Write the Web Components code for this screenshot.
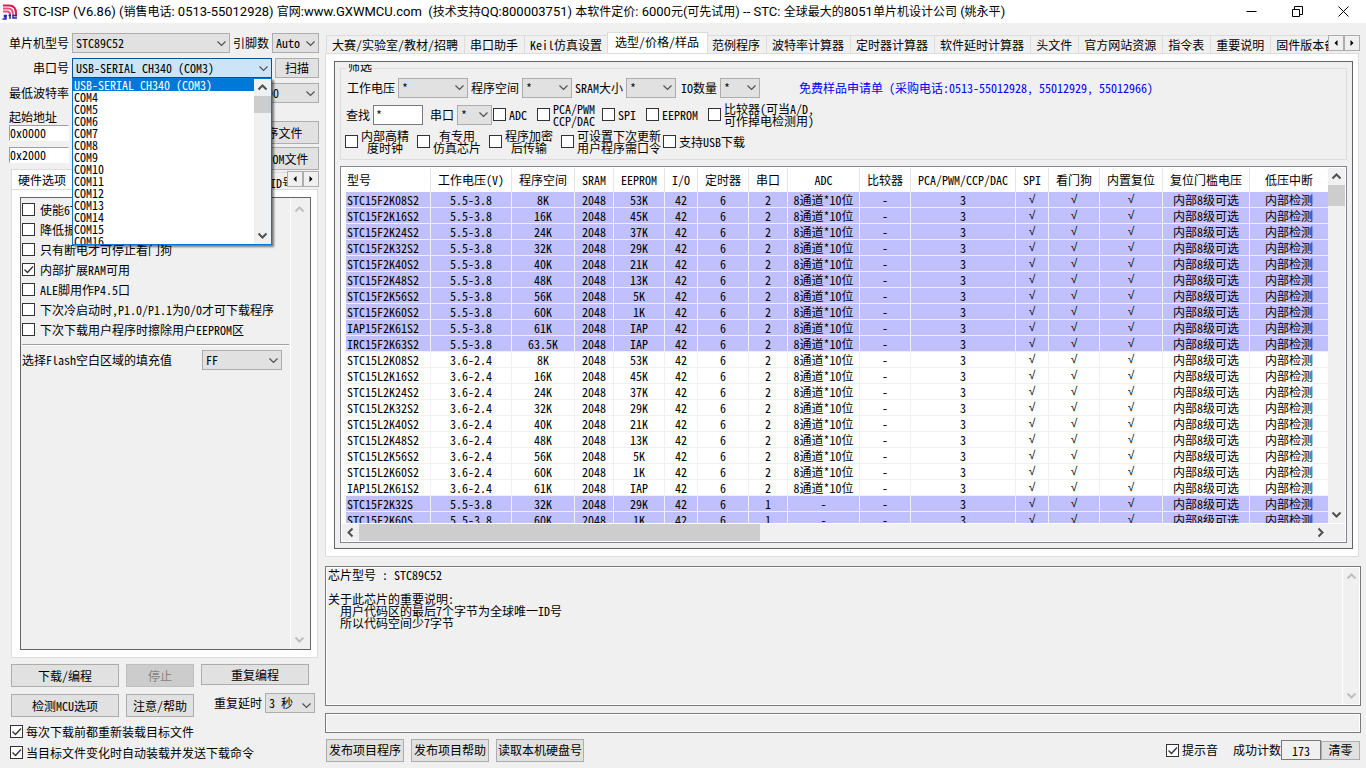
<!DOCTYPE html>
<html lang="zh-CN">
<head>
<meta charset="utf-8">
<title>STC-ISP (V6.86)</title>
<style>
html, body { margin: 0; height: 100%; }
body {
  background: #f0f0f0; color: #000;
  font-family: "Noto Sans CJK SC", sans-serif;
  font-size: 12px; line-height: 16px;
  font-feature-settings: "hwid"; font-kerning: none;
  overflow: hidden;
}
</style>
</head>
<body>
<isp-app></isp-app>
<script>
const SHARED = `
  *, *::before, *::after { box-sizing: border-box; }
  button, input, select, textarea { font: inherit; font-feature-settings: "hwid"; font-kerning: none; color: inherit; margin: 0; border-radius: 0; }
  svg { display: block; }
`;
const define = (name, css, html, after) => {
  customElements.define(name, class extends HTMLElement {
    connectedCallback() {
      if (this.shadowRoot) return;
      const root = this.attachShadow({ mode: 'open' });
      const body = typeof html === 'function' ? html(this) : html;
      root.innerHTML = `<style>${SHARED}${css}</style>${body}`;
      if (after) after(this, root);
    }
  });
};
const attr = (el, name, fallback = '') => el.getAttribute(name) ?? fallback;

/* Direction mark used by scroll bars and drop-downs */
define('win-chevron', `
  :host { display: block; width: 11px; height: 11px; color: #505050; pointer-events: none; }
  :host([dir="up"]) svg { rotate: 180deg; }
  :host([dir="left"]) svg { rotate: 90deg; }
  :host([dir="right"]) svg { rotate: -90deg; }
`, el => `<svg width="11" height="11" viewBox="0 0 11 11" fill="none" stroke="currentColor" stroke-width="${el.hasAttribute('bold') ? 2 : 1.2}"><path d="M1.5 3.5l4 4 4-4"/></svg>`);

/* Labelled drop-down */
define('win-select', `
  :host { display: flex; }
  label { flex: none; line-height: 20px; padding-right: 3px; text-align: right; }
  .box { display: grid; flex: none; width: var(--w, 50px); }
  select, win-chevron { grid-area: 1 / 1; }
  select { appearance: none; width: 100%; height: 20px; padding: 0 0 0 3px; border: 1px solid #adadad; background: #e1e1e1; line-height: 18px; outline: 0; }
  win-chevron { justify-self: end; align-self: center; margin-right: 3px; }
  :host([open]) select { background: #cce4f7; border-color: #00549a; }
  :host([form]) label { width: 63px; }
`, el => `<label for="s">${attr(el, 'label')}</label>
  <div class="box"><select id="s" aria-label="${attr(el, 'label') || attr(el, 'name')}"><option>${attr(el, 'value')}</option></select><win-chevron></win-chevron></div>`,
(el, root) => { if (!el.hasAttribute('label')) root.querySelector('label').remove(); });

/* Tick box with a one- or two-line caption */
define('win-check', `
  :host { display: block; }
  label { display: flex; align-items: center; gap: 3px; line-height: 12px; white-space: nowrap; }
  :host([wide]) label { gap: 5px; }
  .tick { display: grid; flex: none; }
  input, svg { grid-area: 1 / 1; }
  input { appearance: none; width: 13px; height: 13px; border: 1px solid #333; background: #fff; }
  svg { visibility: hidden; pointer-events: none; }
  input:checked + svg { visibility: visible; }
  :host([center]) .text { text-align: center; }
`, el => `<label><span class="tick"><input type="checkbox" ${el.hasAttribute('checked') ? 'checked' : ''}><svg width="13" height="13" viewBox="0 0 13 13" fill="none" stroke="#333" stroke-width="1.3"><path d="M2.5 6.5l3 3 5.5-6"/></svg></span><span class="text"><slot></slot></span></label>`);

define('win-button', `
  :host { display: block; }
  button { display: block; width: 100%; height: var(--h, 23px); padding: 0; border: 1px solid #adadad; background: #e1e1e1; line-height: 16px; white-space: nowrap; }
  button:disabled { background: #ccc; border-color: #bfbfbf; color: #838383; }
`, el => `<button type="button" ${el.hasAttribute('disabled') ? 'disabled' : ''}><slot></slot></button>`);

define('win-field', `
  :host { display: flex; }
  label { line-height: 20px; padding-right: 3px; }
  input { width: var(--w, 50px); height: 20px; padding: 0 2px; border: 1px solid #7a7a7a; background: #fff; outline: 0; }
  :host([sunken]) input { height: 16px; padding: 0; border: 1px solid; border-color: #a0a0a0 #fff #fff #a0a0a0; }
  :host([plain]) input { background: #f0f0f0; text-align: center; }
  :host([plain]) label { padding-right: 0; }
`, el => `${el.hasAttribute('label') ? `<label for="f">${attr(el, 'label')}</label>` : ''}<input id="f" type="text" aria-label="${attr(el, 'label') || attr(el, 'name')}" value="${attr(el, 'value')}">`);

/* Scroll bar: arrows at the ends, optional thumb between */
define('win-scrollbar', `
  :host { display: flex; flex-direction: column; align-items: center; justify-content: space-between; width: 17px; background: #f0f0f0; }
  :host([horizontal]) { flex-direction: row; width: auto; height: 17px; }
  .cap { flex: none; display: grid; place-items: center; width: 17px; height: 17px; }
  .rail { flex: 1; align-self: stretch; }
  .thumb { background: #cdcdcd; width: 100%; height: var(--thumb, 0px); }
  :host([horizontal]) .thumb { width: var(--thumb, 0px); height: 100%; }
  :host([idle]) win-chevron { color: #bfbfbf; }
`, el => { const h = el.hasAttribute('horizontal');
  return `<span class="cap"><win-chevron bold dir="${h ? 'left' : 'up'}"></win-chevron></span><div class="rail"><div class="thumb"></div></div><span class="cap"><win-chevron bold dir="${h ? 'right' : 'down'}"></win-chevron></span>`; });

/* Pair of arrows that scroll a tab strip */
define('tab-spinner', `
  :host { display: flex; flex: none; }
  button { display: grid; place-items: center; width: 16px; height: 16px; padding: 0; border: 1px solid #adadad; background: #f0f0f0; }
`, `<button type="button" aria-label="向左"><svg width="4" height="6" viewBox="0 0 4 6"><path d="M3.500 0v6L.5 3z"/></svg></button><button type="button" aria-label="向右"><svg width="4" height="6" viewBox="0 0 4 6"><path d="M.5 0v6l3-3z"/></svg></button>`);

define('title-bar', `
  :host { display: flex; align-items: center; height: 23px; background: #fff; padding-left: 2px; }
  h1 { margin: 0 0 0 5px; flex: 1; font: 400 13px/23px Roboto, "Noto Sans CJK SC", sans-serif; font-feature-settings: normal; white-space: pre; }
  h1 span { font-size: 12px; }
  button { width: 46px; height: 23px; border: 0; padding: 0; background: none; display: grid; place-items: center; }
`, `<svg width="16" height="16" viewBox="0 0 16 16" fill="none">
    <path d="M1 1.500h6q7 0 7 8v3" stroke="#d81e4c" stroke-width="2"/>
    <path d="M1 4.500h5q5 0 5 6v1" stroke="#e8507c" stroke-width="2"/>
    <path d="M1 7.500h4q3 0 3 3" stroke="#e8507c" stroke-width="2"/>
    <path d="M5 11.500H2.500v1.500H4v2H.5M9 11.500H6.500M8 10v5M15 11.500h-4v2.500h4" stroke="#2424b8" stroke-width="1.500"/>
  </svg>
  <h1></h1>
  <button type="button" aria-label="最小化"><svg width="11" height="11" viewBox="0 0 11 11" stroke="#000"><path d="M.5 5.500h10"/></svg></button>
  <button type="button" aria-label="还原"><svg width="11" height="11" viewBox="0 0 11 11" stroke="#000" fill="none"><path d="M.5 3.500h7v7h-7zM2.500 3.500v-3h8v8h-3"/></svg></button>
  <button type="button" aria-label="关闭"><svg width="11" height="11" viewBox="0 0 11 11" stroke="#000"><path d="M.5.500l10 10M10.500.500l-10 10"/></svg></button>`,
(el, root) => {
  const title = 'STC-ISP (V6.86) (销售电话: 0513-55012928) 官网:www.GXWMCU.com  (技术支持QQ:800003751) 本软件定价: 6000元(可先试用) -- STC: 全球最大的8051单片机设计公司 (姚永平)';
  root.querySelector('h1').innerHTML = title.replace(/[\u4e00-\u9fff]+/g, '<span>$&</span>');
});

/* Serial port chooser with its list dropped down */
define('port-chooser', `
  :host { display: block; position: relative; }
  .popup { position: absolute; z-index: 5; left: 63px; top: 20px; width: 200px; height: 167px; display: flex; overflow: hidden; border: 1px solid #0078d7; background: #fff; box-shadow: 2px 2px 2px rgba(0,0,0,.5); }
  ul { flex: 1; margin: 0; padding: 0; list-style: none; overflow: hidden; }
  li { height: 12px; line-height: 12px; padding-left: 1px; white-space: nowrap; }
  li[aria-selected="true"] { background: #0078d7; color: #fff; }
`, () => {
  const ports = ['USB-SERIAL CH340 (COM3)'];
  for (let n = 4; n <= 16; n++) ports.push('COM' + n);
  return `<win-select form open label="串口号" value="${ports[0]}" style="--w:200px"></win-select>
  <div class="popup"><ul role="listbox" aria-label="串口号">${ports.map((p, i) => `<li role="option" aria-selected="${i === 0}">${p}</li>`).join('')}</ul><win-scrollbar style="--thumb:17px"></win-scrollbar></div>`;
});

define('hardware-options', `
  :host { display: flex; flex-direction: column; }
  .strip { display: flex; align-items: flex-end; height: 20px; }
  .tab { height: 20px; padding: 0 6px; line-height: 20px; background: #fff; border: 1px solid #dcdcdc; border-bottom: 0; }
  .cut { margin-left: auto; width: 17px; height: 17px; overflow: hidden; white-space: nowrap; border-top: 1px solid #dcdcdc; line-height: 19px; }
  tab-spinner { align-self: flex-start; margin: 2px -1px 0 0; }
  .page { flex: 1; min-height: 0; padding: 7px 6px 7px 8px; background: #fff; border: 1px solid #dcdcdc; display: flex; }
  .inner { flex: 1; display: flex; border: 1px solid #646464; background: #f0f0f0; }
  .list { flex: 1; min-width: 0; padding: 1px; }
  win-check { height: 20px; padding-top: 4px; white-space: nowrap; }
  hr { margin: 5px 0 4px; border: 0; border-top: 1px solid #a0a0a0; border-bottom: 1px solid #fff; }
  .fill { --w: 80px; }
  .fill win-select { justify-content: space-between; padding-right: 7px; }
  win-scrollbar { border-left: 1px solid #fff; width: 20px; padding: 3px 3px 1px 0; }
`, `<div class="strip"><div class="tab" role="tab" aria-selected="true">硬件选项</div><div class="cut" role="tab">ID号</div><tab-spinner></tab-spinner></div>
  <div class="page"><div class="inner"><div class="list">
    <win-check wide>使能6T模式</win-check>
    <win-check wide>降低振荡器的放大增益</win-check>
    <win-check wide>只有断电才可停止看门狗</win-check>
    <win-check wide checked>内部扩展RAM可用</win-check>
    <win-check wide>ALE脚用作P4.5口</win-check>
    <win-check wide>下次冷启动时,P1.0/P1.1为0/0才可下载程序</win-check>
    <win-check wide>下次下载用户程序时擦除用户EEPROM区</win-check>
    <hr>
    <div class="fill"><win-select label="选择Flash空白区域的填充值" value="FF"></win-select></div>
  </div><win-scrollbar idle></win-scrollbar></div></div>`);

define('device-panel', `
  :host { display: flex; flex-direction: column; padding: 10px 3px 9px 9px; }
  .row { display: flex; align-items: flex-start; height: 25px; }
  .row > .end { margin-left: auto; }
  .files { display: grid; grid-template-columns: 62px 105px; justify-content: space-between; height: 61px; }
  .files p { margin: 0; line-height: 17px; }
  .files win-field + win-field { margin-top: 6px; }
  .files .open { display: grid; align-content: start; gap: 3px; padding-top: 13px; }
  hardware-options { flex: 1; min-height: 0; margin: 0 1px 0 2px; }
  .actions { display: grid; grid-template-columns: 108px 68px 108px; gap: 7px; margin: 6px 2px 8px; }
  .delay { margin: -1px -6px 0 13px; }
  .foot { display: grid; gap: 8px; padding-left: 1px; }
`, `<div class="row"><win-select form label="单片机型号" value="STC89C52" style="--w:158px"></win-select><win-select class="end" label="引脚数" value="Auto" style="--w:47px"></win-select></div>
  <div class="row"><port-chooser></port-chooser><win-button class="end" style="width:44px;--h:20px">扫描</win-button></div>
  <div class="row"><span style="line-height:20px">最低波特率</span><win-select class="end" name="最高波特率" value="115200" style="--w:80px"></win-select></div>
  <div class="files"><div><p>起始地址</p><win-field sunken name="程序起始地址" value="0x0000" style="--w:60px"></win-field><win-field sunken name="EEPROM起始地址" value="0x2000" style="--w:60px"></win-field></div>
  <div class="open"><win-button>打开程序文件</win-button><win-button>打开EEPROM文件</win-button></div></div>
  <hardware-options></hardware-options>
  <div class="actions"><win-button>下载/编程</win-button><win-button disabled>停止</win-button><win-button style="--h:21px">重复编程</win-button>
  <win-button>检测MCU选项</win-button><win-button>注意/帮助</win-button><win-select class="delay" label="重复延时" value="3 秒" style="--w:50px"></win-select></div>
  <div class="foot"><win-check checked>每次下载前都重新装载目标文件</win-check><win-check checked>当目标文件变化时自动装载并发送下载命令</win-check></div>`);

/* Filter group above the chip table */
define('chip-filter', `
  :host { display: block; }
  fieldset { margin: 0; padding: 2px 4px 4px; min-width: 0; border: 1px solid #dcdcdc; }
  legend { display: flex; align-items: flex-end; height: 8px; overflow: hidden; margin-left: 1px; padding: 0 2px; line-height: 12px; }
  .row { display: grid; justify-content: start; align-items: center; height: 27px; white-space: nowrap; }
  .a { grid-template-columns: 124px 104px 106px 118px auto; padding-left: 2px; }
  .b { grid-template-columns: 84px 63px 44px 65px 44px 62px auto; padding-left: 1px; }
  .c { grid-template-columns: 72px 72px 72px 102px auto; }
  a { color: #00f; text-decoration: none; }
`, `<fieldset><legend>筛选</legend>
  <div class="row a"><win-select label="工作电压" value="*" style="--w:70px"></win-select><win-select label="程序空间" value="*"></win-select><win-select label="SRAM大小" value="*"></win-select><win-select label="IO数量" value="*" style="--w:40px"></win-select><a href="#order">免费样品申请单 (采购电话:0513-55012928, 55012929, 55012966)</a></div>
  <div class="row b"><win-field label="查找" value="*"></win-field><win-select label="串口" value="*" style="--w:35px"></win-select><win-check>ADC</win-check><win-check>PCA/PWM<br>CCP/DAC</win-check><win-check>SPI</win-check><win-check>EEPROM</win-check><win-check>比较器(可当A/D,<br>可作掉电检测用)</win-check></div>
  <div class="row c"><win-check center>内部高精<br>度时钟</win-check><win-check center>有专用<br>仿真芯片</win-check><win-check center>程序加密<br>后传输</win-check><win-check center>可设置下次更新<br>用户程序需口令</win-check><win-check>支持USB下载</win-check></div>
</fieldset>`);

define('chip-table', `
  :host { display: flex; flex-direction: column; border: 1px solid #828790; background: #fff; padding: 1px; min-height: 0; }
  .view { flex: 1; min-height: 0; display: flex; border-bottom: 1px solid #fff; }
  .clip { flex: 1; min-width: 0; overflow: hidden; }
  table { width: 100%; table-layout: fixed; border-collapse: separate; border-spacing: 0; }
  th, td { padding: 0; font-weight: 400; text-align: center; white-space: nowrap; overflow: hidden; border-right: 1px solid #f0f0f0; }
  th { height: 24px; border-right-color: #e5e5e5; }
  td { height: 16px; line-height: 15px; border-bottom: 1px solid #f0f0f0; }
  th:first-child, td:first-child { text-align: left; border-left: 4px solid #fff; padding-left: 1px; }
  th:last-child, td:last-child { border-right: 0; }
  tr.five td { background: #c0c0ff; }
  td.yes { font-family: "Liberation Sans", sans-serif; }
  win-scrollbar[horizontal] { margin-right: 16px; }
  .bottom { background: #f0f0f0; }
`, () => {
  const heads = ['型号','工作电压(V)','程序空间','SRAM','EEPROM','I/O','定时器','串口','ADC','比较器','PCA/PWM/CCP/DAC','SPI','看门狗','内置复位','复位门槛电压','低压中断'];
  const widths = [89,81,63,39,51,33,51,39,72,51,105,33,51,63,87,78];
  const chips = [['STC15F2K08S2','8K','53K'],['STC15F2K16S2','16K','45K'],['STC15F2K24S2','24K','37K'],['STC15F2K32S2','32K','29K'],['STC15F2K40S2','40K','21K'],['STC15F2K48S2','48K','13K'],['STC15F2K56S2','56K','5K'],['STC15F2K60S2','60K','1K'],['IAP15F2K61S2','61K','IAP'],['IRC15F2K63S2','63.5K','IAP'],
    ['STC15L2K08S2','8K','53K'],['STC15L2K16S2','16K','45K'],['STC15L2K24S2','24K','37K'],['STC15L2K32S2','32K','29K'],['STC15L2K40S2','40K','21K'],['STC15L2K48S2','48K','13K'],['STC15L2K56S2','56K','5K'],['STC15L2K60S2','60K','1K'],['IAP15L2K61S2','61K','IAP'],['STC15F2K32S','32K','29K'],['STC15F2K60S','60K','1K']];
  const rows = chips.map(([name, rom, ee]) => {
    const five = name[5] === 'F', two = name.endsWith('S2');
    const cells = [name, five ? '5.5-3.8' : '3.6-2.4', rom, '2048', ee, '42', '6', two ? '2' : '1', two ? '8通道*10位' : '-', '-', '3', '√', '√', '√', '内部8级可选', '内部检测'];
    return `<tr class="${five ? 'five' : ''}">${cells.map(c => `<td${c === '√' ? ' class="yes"' : ''}>${c}</td>`).join('')}</tr>`;
  }).join('');
  return `<div class="view"><div class="clip"><table><colgroup>${widths.map(w => `<col style="width:${w}px">`).join('')}</colgroup><thead><tr>${heads.map(h => `<th>${h}</th>`).join('')}</tr></thead><tbody>${rows}</tbody></table></div><win-scrollbar style="--thumb:21px"></win-scrollbar></div>
  <div class="bottom"><win-scrollbar horizontal style="--thumb:401px"></win-scrollbar></div>`;
});

define('tool-tabs', `
  :host { display: flex; flex-direction: column; min-height: 0; }
  .strip { display: flex; height: 20px; padding: 0 1px; }
  .tabs { flex: 1; min-width: 0; display: flex; align-items: flex-end; overflow: hidden; margin-top: -1px; }
  .tab { flex: none; height: 18px; padding: 0 6px 0 5px; line-height: 18px; border: 1px solid #dcdcdc; border-width: 1px 0 0 1px; white-space: nowrap; }
  .tab[aria-selected="true"] { height: 21px; padding: 0 8px 0 7px; line-height: 18px; background: #fff; border-right-width: 1px; margin: 0 -2px 0 -1px; position: relative; }
  tab-spinner { margin: 2px 0 0; }
  .page { flex: 1; min-height: 0; margin-right: 2px; padding: 7px 5px 7px 8px; display: flex; background: #fff; border: 1px solid #dcdcdc; }
  .inner { flex: 1; min-width: 0; display: flex; flex-direction: column; gap: 6px; padding: 2px 5px 5px; border: 1px solid #646464; background: #f0f0f0; }
  chip-table { flex: 1; }
`, `<div class="strip"><div class="tabs" role="tablist">${['大赛/实验室/教材/招聘','串口助手','Keil仿真设置','选型/价格/样品','范例程序','波特率计算器','定时器计算器','软件延时计算器','头文件','官方网站资源','指令表','重要说明','固件版本备注'].map((t, i) => `<div class="tab" role="tab" aria-selected="${i === 3}">${t}</div>`).join('')}</div><tab-spinner></tab-spinner></div>
  <div class="page"><div class="inner"><chip-filter></chip-filter><chip-table></chip-table></div></div>`);

define('chip-notes', `
  :host { display: flex; height: 140px; border: 1px solid #7a7a7a; padding: 1px; background: #f0f0f0; box-shadow: inset 0 0 0 1px #fff; }
  .text { flex: 1; margin: 0; padding: 1px; font: inherit; line-height: 12px; white-space: pre; }
  win-scrollbar { border-left: 1px solid #fff; }
`, `<div class="text">芯片型号 : STC89C52

关于此芯片的重要说明:
  用户代码区的最后7个字节为全球唯一ID号
  所以代码空间少7字节</div><win-scrollbar idle></win-scrollbar>`);

define('status-row', `
  :host { display: flex; align-items: center; height: 24px; }
  .left { display: flex; gap: 7px; padding-left: 1px; }
  .right { display: flex; align-items: center; margin-left: auto; padding-right: 1px; }
  win-check { margin-right: 15px; }
`, `<div class="left"><win-button style="width:78px">发布项目程序</win-button><win-button style="width:78px">发布项目帮助</win-button><win-button style="width:88px">读取本机硬盘号</win-button></div>
  <div class="right"><win-check checked>提示音</win-check><win-field plain label="成功计数" value="173" style="--w:40px"></win-field><win-button style="width:39px;--h:19px">清零</win-button></div>`);

define('isp-app', `
  :host { display: flex; flex-direction: column; height: 100vh; }
  main { flex: 1; min-height: 0; display: grid; grid-template-columns: 322px minmax(0, 1fr); }
  device-panel { min-height: 0; }
  section { display: flex; flex-direction: column; min-height: 0; padding: 10px 5px 6px 3px; }
  tool-tabs { flex: 1; }
  chip-notes { margin-top: 9px; }
  .progress { height: 20px; margin: 7px 0 5px; border: 1px solid #7a7a7a; box-shadow: inset 0 0 0 1px #fff; }
`, `<title-bar></title-bar><main><device-panel></device-panel><section><tool-tabs></tool-tabs><chip-notes></chip-notes><div class="progress" role="progressbar" aria-label="进度"></div><status-row></status-row></section></main>`);
</script>
</body>
</html>
